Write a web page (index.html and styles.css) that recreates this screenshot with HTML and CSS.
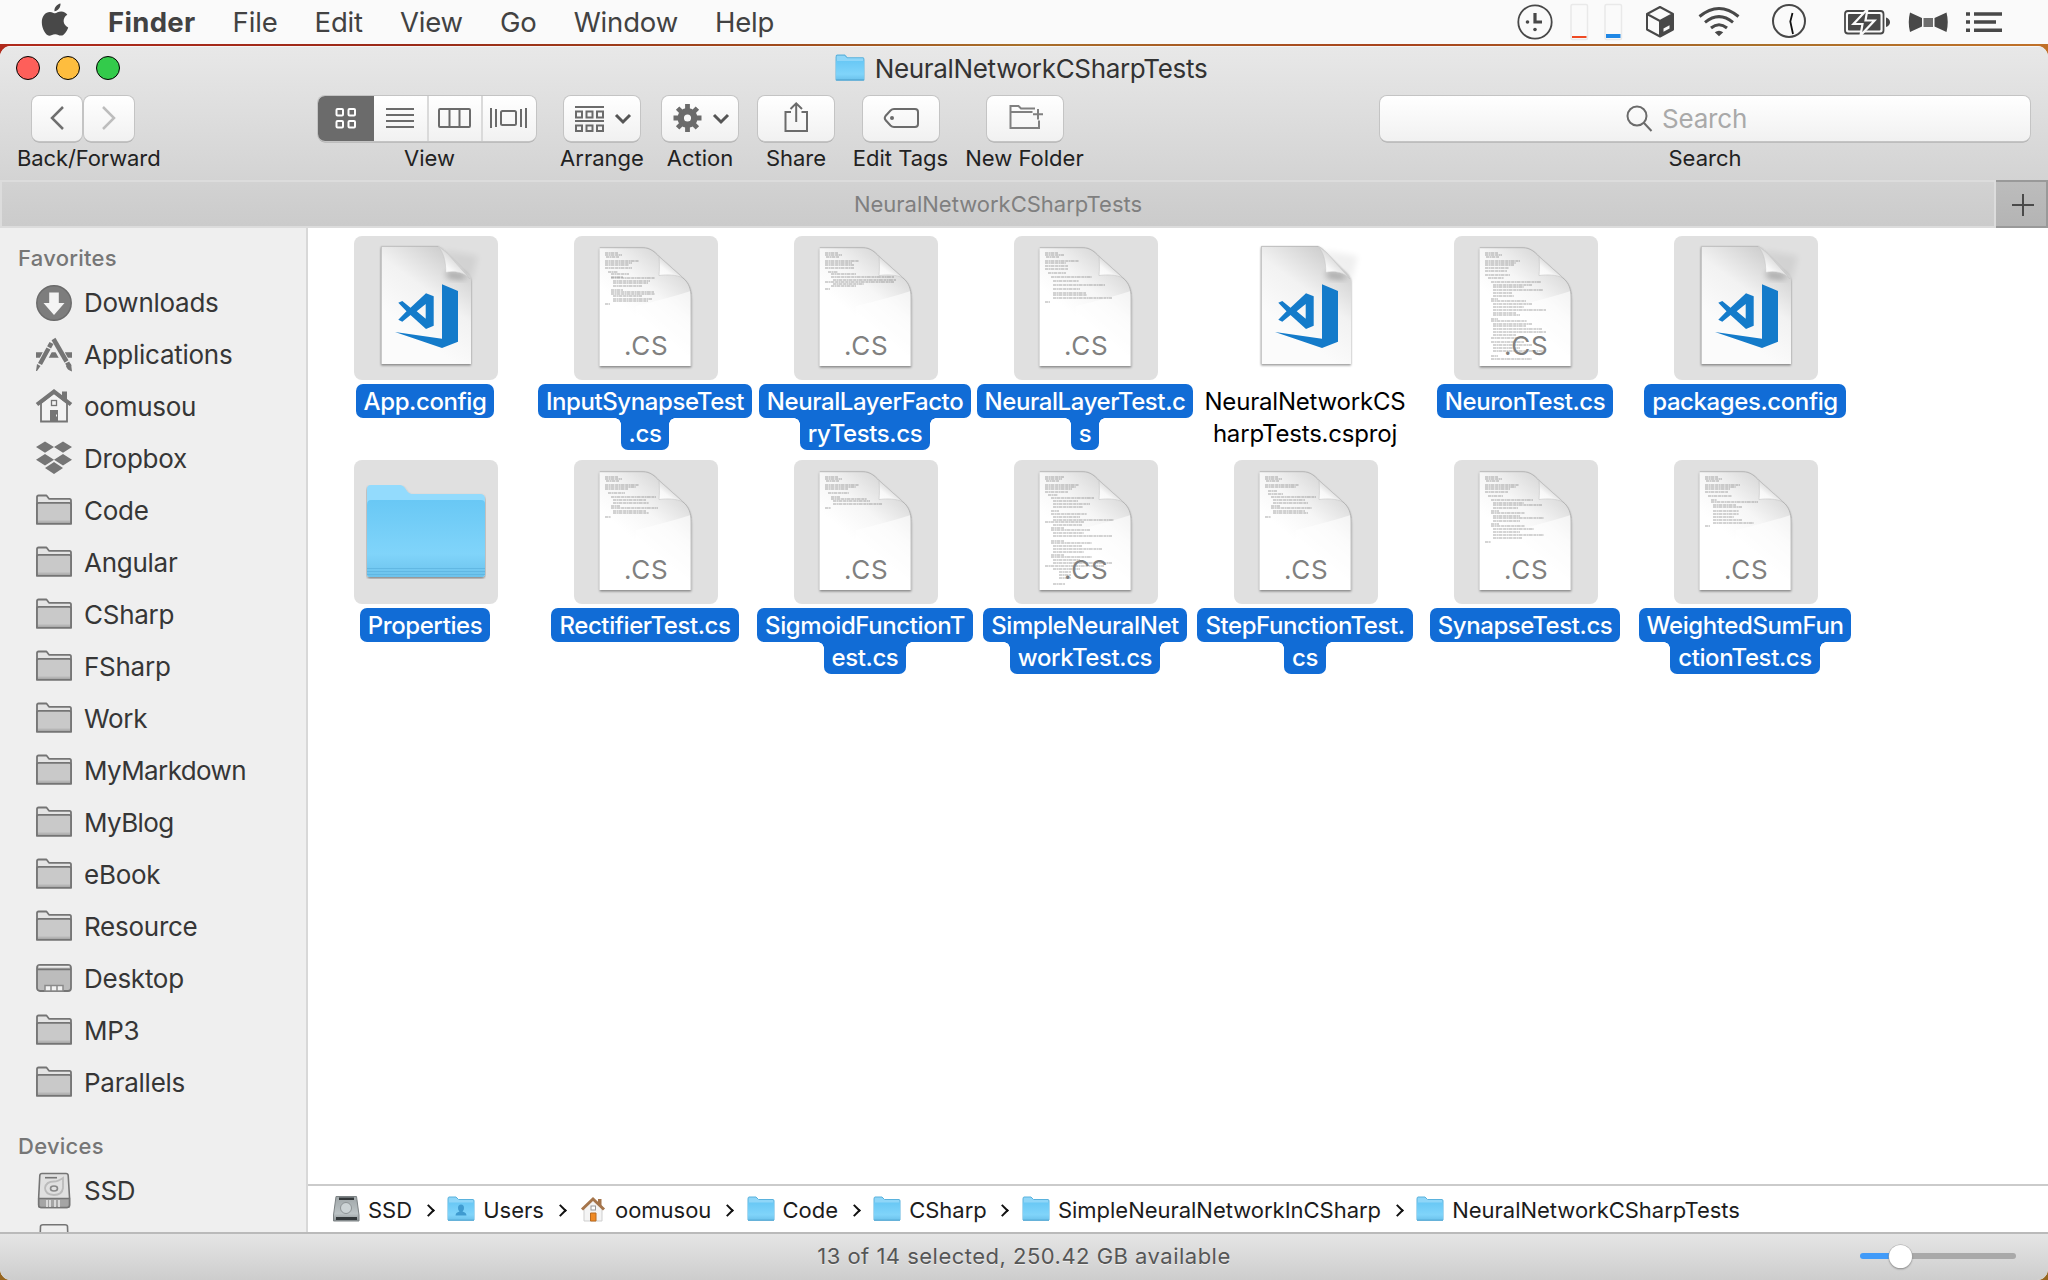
FILE: index.html
```
<!DOCTYPE html>
<html lang="en">
<head>
<meta charset="utf-8">
<title>NeuralNetworkCSharpTests</title>
<link rel="stylesheet" href="styles.css">
</head>
<body>
<svg class="defs" width="0" height="0" aria-hidden="true">
  <defs>
    <linearGradient id="gPage" gradientUnits="userSpaceOnUse" x1="58" y1="78" x2="97" y2="31">
      <stop offset="0" stop-color="#fff"/><stop offset="0.5" stop-color="#f6f6f6"/><stop offset="1" stop-color="#dcdcdc"/>
    </linearGradient>
    <linearGradient id="gFold" x1="0" y1="1" x2="0.6" y2="0.3">
      <stop offset="0" stop-color="#fff"/><stop offset="0.5" stop-color="#f8f8f8"/><stop offset="1" stop-color="#d0d0d0"/>
    </linearGradient>
    <linearGradient id="gVs" gradientUnits="userSpaceOnUse" x1="50" y1="90" x2="100" y2="22">
      <stop offset="0" stop-color="#fbfbfb"/><stop offset="0.5" stop-color="#f2f2f2"/><stop offset="1" stop-color="#cfcfcf"/>
    </linearGradient>
    <linearGradient id="gFolder" x1="0" y1="0" x2="0" y2="1">
      <stop offset="0" stop-color="#69c8f5"/><stop offset="0.7" stop-color="#80d4fa"/><stop offset="1" stop-color="#6cc2ec"/>
    </linearGradient>
    <linearGradient id="gDisk" x1="0" y1="0" x2="0" y2="1">
      <stop offset="0" stop-color="#9fa6a8"/><stop offset="0.7" stop-color="#bcc3c5"/><stop offset="1" stop-color="#8a9092"/>
    </linearGradient>
    <filter id="soft" x="-20%" y="-20%" width="140%" height="140%">
      <feDropShadow dx="0" dy="1.4" stdDeviation="1.3" flood-color="#000" flood-opacity="0.42"/>
    </filter>
    <filter id="haze" x="-50%" y="-50%" width="200%" height="200%"><feGaussianBlur stdDeviation="3"/></filter>

    <symbol id="page" viewBox="0 0 144 144">
      <path filter="url(#soft)" fill="url(#gPage)" d="M25.7 11.5H69C76 11.5 81 16 85 20.5L109 42C115 47 117.3 53 117.3 62V130H25.7Z"/>
      <path fill="#fff" d="M60 129.500L62 70Q95 62 116.800 55V129.500Z" opacity="0.6"/>
      <path fill="none" stroke="#aaa" stroke-width="0.8" d="M25.7 11.7H69C76 11.7 81 16 85 20.5L109 42C115 47 117.1 53 117.1 62V130"/>
      <path fill="url(#gFold)" stroke="#bbb" stroke-width="0.5" d="M85 20.5C85.5 28 85.5 34 85 39.5C93 38.5 102 38.5 109 42Z"/>
    </symbol>
    <symbol id="vs" viewBox="0 0 144 144">
      <path filter="url(#haze)" fill="#000" opacity="0.06" d="M88 14L124 20L117 46Z"/>
      <path filter="url(#soft)" fill="url(#gVs)" d="M27 10H84C88 11 90 14 93 17L114 38C116 40 117 42 117 45V128H27Z"/>
      <path fill="none" stroke="#b5b5b5" stroke-width="0.8" d="M27.4 128V10.4H84"/>
      <path filter="url(#haze)" fill="#000" opacity="0.3" d="M92 36L112 39L110 43L94 42Z"/>
      <path fill="url(#gFold)" stroke="#c4c4c4" stroke-width="0.5" d="M84 10C90 17 92 26 91.7 36.5C100 34.500 110 36 116 43L93 17Z"/>
      <path fill="#147bca" fill-rule="evenodd" d="M88 48.300L104 55V105.700L88 112L41 96L88 102.700ZM72 57.300L79.700 60.300V89.700L72 93L56.500 78.900L48.300 85.700L44.300 83.700L52.500 75.300L44.300 66.700L48.300 65L56.500 71.800ZM71.700 68L62.700 75.300L71.700 82.700Z"/>
    </symbol>
    <symbol id="bluefolder" viewBox="0 0 120 94">
      <path filter="url(#soft)" fill="#93dbfd" d="M1 4Q1 0 5 0H34C40 0 40 9 46 9H114Q119 9 119 14V88Q119 92 116 92H4Q1 92 1 89Z"/>
      <path fill="url(#gFolder)" d="M1 20Q1 15 5 15H115Q119 15 119 19V88Q119 92 116 92H4Q1 92 1 89Z"/>
      <path stroke="#5bb2de" stroke-width="1" opacity="0.7" d="M1 83.500H119M1 86.500H119M1 89.500H119"/>
    </symbol>
    <symbol id="minifolder" viewBox="0 0 28 26">
      <path fill="#8fd6f8" stroke="#5ab2dd" stroke-width="1" d="M1 3Q1 1 2 1H9L11.500 3.500H26Q27 3.500 27 5V24H1Z"/>
      <path fill="url(#gFolder)" d="M1 6.500H27V24H1Z"/>
      <path stroke="#55a9d4" stroke-width="1.200" d="M1 24.200H27"/>
    </symbol>
    <symbol id="sfolder" viewBox="0 0 36 36">
      <path fill="#e4e4e4" stroke="#757575" stroke-width="1.800" stroke-linejoin="round" d="M1 30.500V4Q1 2.500 2.500 2.500H10.500L13 5.800H33.500Q35 5.800 35 7.500V30.500Z"/>
      <path fill="#c9c9c9" stroke="#757575" stroke-width="1.800" d="M1 30.500V11.500Q1 9.800 2.700 9.800H33.300Q35 9.800 35 11.500V30.500Z"/>
      <path stroke="#b5b5b5" stroke-width="2" d="M2 28.600H34"/>
    </symbol>
  </defs>
</svg>

<header class="menubar">
  <svg class="apple" width="28" height="34" viewBox="0 0 28 34"><path fill="#484848" d="M19.500 0.500C19.800 4.500 16.800 8 13.500 8.200C13 4.600 16.200 1 19.500 0.500ZM14 10.300C15.400 10.300 17.300 8.600 20.200 8.600C22.900 8.600 25.100 10 26.300 11.800C21 15 21.600 22 27.200 24.400C25.800 28.400 23 32.500 20.200 32.600C17.800 32.700 17 31.200 14.200 31.200C11.400 31.200 10.500 32.600 8.200 32.700C4.800 32.800 0.800 25.800 0.800 19.300C0.800 12.800 4.700 9 8.700 8.900C11.200 8.800 12.900 10.300 14 10.300Z"/></svg>
  <nav class="menus">
    <span class="menu-app">Finder</span><span>File</span><span>Edit</span><span>View</span><span>Go</span><span>Window</span><span>Help</span>
  </nav>
  <svg class="status-icons" width="500" height="44" viewBox="1510 0 500 44" fill="none" stroke="#484848">
    <circle cx="1535" cy="22" r="16.700" stroke-width="1.800"/>
    <path stroke-width="3.200" d="M1535 13V22H1542"/>
    <g fill="#484848" stroke="none"><circle cx="1527.500" cy="22" r="1.800"/><circle cx="1535" cy="29.500" r="1.800"/></g>
    <rect x="1571" y="4.500" width="16.500" height="35" rx="1.500" stroke="#e9e9e9" stroke-width="1.500"/><rect x="1572" y="36" width="14.500" height="2" fill="#ef4a23" stroke="none"/>
    <rect x="1605" y="4.500" width="16.500" height="35" rx="1.500" stroke="#e9e9e9" stroke-width="1.500"/><rect x="1606" y="34" width="14.500" height="4" fill="#1f87e5" stroke="none"/>
    <path stroke-width="2" stroke-linejoin="round" d="M1660 7L1673 14V29.500L1660 36.500L1647 29.500V14ZM1647 14L1660 21L1673 14M1660 21V36.500"/>
    <path fill="#484848" stroke="none" d="M1660 21L1673 14V29.500L1660 36.500Z"/><path fill="#fafafa" stroke="none" d="M1663.500 28.500L1669.500 25.300V28.500L1663.500 31.700Z"/>
    <g stroke-width="3"><path d="M1699.500 16.500Q1719 0.500 1738.500 16.500"/><path d="M1705 22.300Q1719 11 1733 22.300"/><path d="M1711 28Q1719 21.500 1727 28"/></g>
    <path fill="#484848" stroke="none" d="M1719 36.200L1714.800 32.300Q1719 29 1723.200 32.300Z"/>
    <circle cx="1789" cy="21" r="16" stroke-width="2"/><path stroke="#111" stroke-width="1.800" d="M1792.500 13L1790.300 21.500L1793 34"/>
    <rect x="1845" y="11" width="38.500" height="22.500" rx="3" stroke-width="1.800"/><rect x="1848" y="14" width="32.500" height="16.500" rx="1" fill="#484848" stroke="none"/>
    <path fill="#484848" stroke="none" d="M1886 17.500Q1890 19 1890 22.200Q1890 25.500 1886 27Z"/>
    <path fill="#484848" stroke="#fafafa" stroke-width="2.200" d="M1867.500 9L1853.500 24H1862.500L1860.500 35.500L1874.500 20.500H1865.500Z"/>
    <path fill="#484848" stroke="none" d="M1910 12.500L1922 18V26.500L1910 32Q1907.500 22 1910 12.500ZM1946.500 12.500L1934.500 18V26.500L1946.500 32Q1949 22 1946.500 12.500Z"/><rect x="1923.500" y="18" width="9.500" height="9" fill="#6e6e6e" stroke="none"/>
    <path stroke-width="3.600" d="M1974 14H2002M1974 22H1996M1974 30.200H2002M1966 14H1970M1966 22H1970M1966 30.200H1970"/>
  </svg>
</header>

<main class="window">
  <header class="chrome">
    <div class="titlebar">
      <div class="lights"><i class="close"></i><i class="mini"></i><i class="zoom"></i></div>
      <div class="title"><svg width="30" height="28"><use href="#minifolder"/></svg><span>NeuralNetworkCSharpTests</span></div>
    </div>
    <div class="toolbar">
      <div class="tool tool-nav">
        <div class="pair">
          <span class="btn"><svg width="50" height="46" fill="none" stroke="#6f6f6f" stroke-width="2.500"><path d="M31 12L20 23L31 34"/></svg></span>
          <span class="btn"><svg width="50" height="46" fill="none" stroke="#bdbdbd" stroke-width="2.500"><path d="M19 12L30 23L19 34"/></svg></span>
        </div>
        <span class="label">Back/Forward</span>
      </div>
      <div class="tool tool-view">
        <div class="segments">
          <span class="seg on"><svg width="56" height="46" fill="none" stroke="#fff" stroke-width="2"><rect x="18.500" y="14" width="6.500" height="6.500" rx="1"/><rect x="30.500" y="14" width="6.500" height="6.500" rx="1"/><rect x="18.500" y="26" width="6.500" height="6.500" rx="1"/><rect x="30.500" y="26" width="6.500" height="6.500" rx="1"/></svg></span>
          <span class="seg"><svg width="54" height="46" stroke="#6b6b6b" stroke-width="2"><path d="M12 14H40M12 20H40M12 26H40M12 32H40"/></svg></span>
          <span class="seg"><svg width="54" height="46" fill="none" stroke="#6b6b6b" stroke-width="2"><rect x="10" y="14" width="31" height="18" rx="1"/><path d="M20.500 14V32M30.500 14V32"/></svg></span>
          <span class="seg"><svg width="54" height="46" fill="none" stroke="#6b6b6b" stroke-width="2"><path d="M8 13V33M13 14V32M38 14V32M43 13V33"/><rect x="18" y="16" width="15" height="14" rx="1.500"/></svg></span>
        </div>
        <span class="label">View</span>
      </div>
      <div class="tool">
        <span class="btn wide"><svg width="78" height="46" fill="none" stroke="#6b6b6b" stroke-width="2"><path d="M12 12H41M12 26H41"/><path d="M13 16.500H19V22.500H13ZM23.500 16.500H29.500V22.500H23.500ZM34 16.500H40V22.500H34ZM13 30.500H19V36H13ZM23.500 30.500H29.500V36H23.500ZM34 30.500H40V36H34Z"/><path stroke="#555" stroke-width="3" d="M53 20L60 27L67 20"/></svg></span>
        <span class="label">Arrange</span>
      </div>
      <div class="tool">
        <span class="btn wide"><svg width="78" height="46" fill="none"><circle cx="26.500" cy="23" r="6.800" stroke="#6b6b6b" stroke-width="6.500"/><path stroke="#6b6b6b" stroke-width="4.800" d="M26.500 9V15M26.500 31V37M12.500 23H18.500M34.500 23H40.500M16.600 13.100L21 17.500M32 28.500L36.400 32.900M16.600 32.900L21 28.500M32 17.500L36.400 13.100"/><path stroke="#555" stroke-width="3" d="M53 20L60 27L67 20"/></svg></span>
        <span class="label">Action</span>
      </div>
      <div class="tool tool-share">
        <span class="btn wide"><svg width="78" height="46" fill="none" stroke="#6b6b6b" stroke-width="2"><path d="M34 17H28.500V36H50V17H44.500M39.200 27V8.500M33.500 14L39.200 8.300L45 14"/></svg></span>
        <span class="label">Share</span>
      </div>
      <div class="tool tool-tags">
        <span class="btn wide"><svg width="78" height="46" fill="none" stroke="#6b6b6b" stroke-width="2"><path d="M32 14H53Q56 14 56 17V29Q56 32 53 32H32Q30 32 28.500 30.500L23.500 25Q22 23 23.500 21L28.500 15.500Q30 14 32 14Z"/><circle cx="30" cy="23" r="2" fill="#6b6b6b" stroke="none"/></svg></span>
        <span class="label">Edit Tags</span>
      </div>
      <div class="tool tool-new">
        <span class="btn wide"><svg width="78" height="46" fill="none" stroke="#808080" stroke-width="2"><path d="M49 13.500H35L32.500 11H24.500V33H53V25.500M24.500 17H46.500M47 19.200H57M52 14V24.500"/></svg></span>
        <span class="label">New Folder</span>
      </div>
      <div class="tool tool-search">
        <span class="btn field"><svg width="27" height="28" fill="none" stroke="#6b6b6b" stroke-width="2"><circle cx="11" cy="11" r="9.500"/><path d="M17.800 17.800L25.500 26"/></svg><span>Search</span></span>
        <span class="label">Search</span>
      </div>
    </div>
    <div class="tabbar">
      <span class="tab">NeuralNetworkCSharpTests</span>
      <span class="addtab"><svg width="22" height="22" stroke="#4a4a4a" stroke-width="2"><path d="M0 11H22M11 0V22"/></svg></span>
    </div>
  </header>

  <div class="body">
    <aside class="sidebar">
      <h2>Favorites</h2>
      <ul>
        <li><svg><circle cx="18" cy="18" r="17.200" fill="#7d7d7d" stroke="#6b6b6b" stroke-width="1.500"/><path fill="#f4f4f4" d="M13.200 7.500H22.800V18H28.500L18 30L7.500 18H13.200Z"/></svg><span>Downloads</span></li>
        <li><svg fill="none" stroke="#757575"><path stroke-width="5.500" d="M0 18H7M12 18H24M29 18H36"/><path stroke="#efefef" stroke-width="8" d="M17 4L2 33M18 4L34 33"/><path stroke-width="4.500" d="M17.500 2L30.500 24.500"/><path stroke-width="4.500" stroke-dasharray="5 1.300 30" d="M15.500 6L4 27"/><path stroke-width="4.500" d="M31.200 25.500L33.500 30"/><path fill="#757575" stroke="none" d="M1 27L4.500 29L1 34H0ZM30 29L35 26.500L36 34.500Q31 33 30 29Z"/></svg><span>Applications</span></li>
        <li><svg fill="none" stroke="#757575"><path stroke-width="1.800" fill="#f3f3f3" d="M5 14V32.500H31V14L18 4Z"/><path stroke-width="4" d="M1 15.500L18 2.500L35 15.500"/><path fill="#757575" stroke="none" d="M26 2.500H31V12L26 8ZM14 21H22V33H14Z"/><rect x="15.500" y="11.500" width="5" height="5" stroke-width="1.300"/><path stroke="#efefef" d="M20.500 25.500V27.500"/></svg><span>oomusou</span></li>
        <li><svg fill="#757575"><path d="M9 0.500L18 6L9 11.800L0 6ZM27 0.500L36 6L27 11.800L18 6ZM9 13L18 18.800L9 24.500L0 18.800ZM27 13L36 18.800L27 24.500L18 18.800ZM18 21L27 27L18 33L9 27Z"/></svg><span>Dropbox</span></li>
        <li><svg><use href="#sfolder"/></svg><span>Code</span></li>
        <li><svg><use href="#sfolder"/></svg><span>Angular</span></li>
        <li><svg><use href="#sfolder"/></svg><span>CSharp</span></li>
        <li><svg><use href="#sfolder"/></svg><span>FSharp</span></li>
        <li><svg><use href="#sfolder"/></svg><span>Work</span></li>
        <li><svg><use href="#sfolder"/></svg><span class="snug">MyMarkdown</span></li>
        <li><svg><use href="#sfolder"/></svg><span class="snug">MyBlog</span></li>
        <li><svg><use href="#sfolder"/></svg><span>eBook</span></li>
        <li><svg><use href="#sfolder"/></svg><span>Resource</span></li>
        <li><svg fill="none" stroke="#757575" stroke-width="1.800"><rect x="1" y="4" width="34" height="26" rx="3" fill="#bcbcbc"/><path d="M2.500 5.700H33.500" stroke="#ededed"/><path d="M1 8.300H35"/><path fill="#f2f2f2" stroke="#8a8a8a" stroke-width="1.500" d="M9 24.500H15V30H9ZM15 24.500H21V30H15ZM21 24.500H27V30H21Z"/></svg><span>Desktop</span></li>
        <li><svg><use href="#sfolder"/></svg><span>MP3</span></li>
        <li><svg><use href="#sfolder"/></svg><span>Parallels</span></li>
      </ul>
      <h2 class="devices">Devices</h2>
      <ul>
        <li><svg fill="none" stroke="#757575" stroke-width="1.600"><path fill="#e0e0e0" d="M6 0.500H30Q32 0.500 32.200 2.500L33.500 24V32Q33.500 34.500 31 34.500H5Q2.700 34.500 2.700 32V24L3.800 2.500Q4 0.500 6 0.500Z"/><path fill="#a5a5a5" d="M2.700 25.500H33.500V32Q33.500 34.500 31 34.500H5Q2.700 34.500 2.700 32Z"/><path stroke-width="2" stroke="#d9d9d9" d="M11 27V34M14 27V34M19 27V34M23 27V34"/><path stroke="#bbb" stroke-width="1.800" d="M27 5V15Q26 22 18 22Q9 21.500 9 15Q10 8.500 18 8.500Q22 8.500 27 5Z"/><ellipse cx="18" cy="15.500" rx="3.500" ry="2.500" stroke="#888"/><path d="M9 4.700H21"/></svg><span>SSD</span></li>
        <li><svg fill="none" stroke="#757575" stroke-width="1.600"><path d="M3.500 30L4.500 1.500Q4.500 -0.200 7 -0.200H29Q31.500 -0.200 31.500 1.500L32.500 30Z"/></svg></li>
      </ul>
    </aside>

    <section class="content">
      <div class="grid">
        <figure class="sel"><svg><use href="#vs"/></svg><figcaption><b>App.config</b></figcaption></figure>
        <figure class="sel"><svg><use href="#page"/><path class="code" d="M31 17H44M31 19H48M32 21H45M31 25H65M31 27H58M31 29H55M31 32H58M34 36H44M37 38H55M37 41H49M37 42H81M39 45H76M39 47H74M39 50H68M37 54H49M37 56H80M37 58H81M39 60H68M39 63H78M39 65H74M31 68H36"/><text x="50" y="119">.CS</text></svg><figcaption><b>InputSynapseTest</b><b>.cs</b></figcaption></figure>
        <figure class="sel"><svg><use href="#page"/><path class="code" d="M31 17H44M31 19H48M32 21H45M31 25H65M31 27H58M31 29H60M31 32H60M34 36H44M37 38H62M37 41H100M39 44H102M31 46H100M39 48H70M37 50H62M31 53H36"/><text x="50" y="119">.CS</text></svg><figcaption><b>NeuralLayerFacto</b><b>ryTests.cs</b></figcaption></figure>
        <figure class="sel"><svg><use href="#page"/><path class="code" d="M31 17H44M31 19H50M32 21H45M31 25H65M31 27H52M31 30H54M31 33H54M34 37H52M37 41H78M39 45H65M39 49H91M39 53H66M39 57H72M39 59H73M39 62H98M31 66H36"/><text x="50" y="119">.CS</text></svg><figcaption><b>NeuralLayerTest.c</b><b>s</b></figcaption></figure>
        <figure><svg><use href="#vs"/></svg><figcaption><b>NeuralNetworkCS</b><b>harpTests.csproj</b></figcaption></figure>
        <figure class="sel"><svg><use href="#page"/><path class="code" d="M31 17H44M31 19H48M32 21H45M31 25H66M31 27H62M31 29H60M31 32H55M31 35H53M31 39H56M34 42H50M37 46H87M39 49H78M39 51H70M39 54H89M39 57H58M39 60H60M37 63H44M37 65H72M39 68H78M39 71H70M39 74H92M39 77H62M39 79H66M37 83H44M37 85H73M39 88H78M39 90H72M39 93H88M39 96H92M39 99H62M37 102H72M37 106H70M39 109H78M39 112H66M39 115H90M37 120H44M37 123H78"/><text x="50" y="119">.CS</text></svg><figcaption><b>NeuronTest.cs</b></figcaption></figure>
        <figure class="sel"><svg><use href="#vs"/></svg><figcaption><b>packages.config</b></figcaption></figure>

        <figure class="sel"><svg><use href="#bluefolder" x="12" y="25" width="120" height="94"/></svg><figcaption><b>Properties</b></figcaption></figure>
        <figure class="sel"><svg><use href="#page"/><path class="code" d="M31 17H44M31 19H48M32 21H45M31 25H65M31 27H62M31 29H54M34 33H51M37 37H82M39 40H72M39 43H75M37 46H46M37 48H84M39 51H72M39 53H75M31 57H37"/><text x="50" y="119">.CS</text></svg><figcaption><b>RectifierTest.cs</b></figcaption></figure>
        <figure class="sel"><svg><use href="#page"/><path class="code" d="M31 17H44M31 19H48M32 21H45M31 25H65M31 27H62M31 29H54M34 33H55M37 37H46M37 39H73M39 41H76M39 44H88M31 48H37"/><text x="50" y="119">.CS</text></svg><figcaption><b>SigmoidFunctionT</b><b>est.cs</b></figcaption></figure>
        <figure class="sel"><svg><use href="#page"/><path class="code" d="M31 17H50M31 19H48M32 21H45M31 25H65M31 27H62M31 29H58M31 32H54M34 35H44M37 38H80M39 41H64M39 44H76M39 47H69M37 51H45M37 54H73M39 57H66M39 60H100M31 62H70M39 65H68M37 68H50M37 70H76M39 73H70M39 76H98M37 81H50M37 83H78M39 86H68M39 89H88M39 92H70M37 95H50M37 97H78M39 100H66M39 103H98M31 106H90M39 109H66M45 112H57M45 115H57M45 118H57M39 124H51"/><text x="50" y="119">.CS</text></svg><figcaption><b>SimpleNeuralNet</b><b>workTest.cs</b></figcaption></figure>
        <figure class="sel"><svg><use href="#page"/><path class="code" d="M31 17H44M31 19H48M32 21H45M31 25H65M31 27H62M34 31H43M34 34H49M37 37H82M39 40H71M39 43H74M37 46H46M37 48H78M39 51H71M39 53H74M31 57H37"/><text x="50" y="119">.CS</text></svg><figcaption><b>StepFunctionTest.</b><b>cs</b></figcaption></figure>
        <figure class="sel"><svg><use href="#page"/><path class="code" d="M31 17H44M31 19H48M32 21H45M31 25H65M31 27H62M31 29H56M31 32H54M34 36H49M37 40H79M39 43H70M39 45H88M39 48H64M37 51H45M37 53H71M39 56H66M39 58H90M39 61H66M37 64H45M37 66H71M39 69H80M39 72H66M39 75H90M39 78H68M31 82H37"/><text x="50" y="119">.CS</text></svg><figcaption><b>SynapseTest.cs</b></figcaption></figure>
        <figure class="sel"><svg><use href="#page"/><path class="code" d="M31 17H44M31 19H48M32 21H45M31 25H66M31 27H62M31 29H56M31 32H54M34 36H58M37 40H43M37 42H84M39 45H62M39 47H68M39 51H65M39 54H65M39 57H60M39 60H68M39 63H80M31 66H36"/><text x="50" y="119">.CS</text></svg><figcaption><b>WeightedSumFun</b><b>ctionTest.cs</b></figcaption></figure>
      </div>

      <nav class="pathbar">
        <span class="crumb"><svg><path fill="url(#gDisk)" stroke="#7c8284" d="M4 1.500H24.500L27 20V26H1.500V20Z"/><path fill="#33383a" d="M7 2.500H22V5H7ZM4 22H25V25H4Z"/><circle cx="14" cy="13" r="5.500" fill="#ccd3d5" stroke="#8e9496"/></svg><span>SSD</span></span>
        <span class="crumb"><svg><use href="#minifolder"/><path fill="#3f9bd0" d="M14 9.500Q17 9.500 17 13Q17 15.500 15.500 16.500Q19.500 17.500 19.500 20.500H8.500Q8.500 17.500 12.500 16.500Q11 15.500 11 13Q11 9.500 14 9.500Z"/></svg><span>Users</span></span>
        <span class="crumb"><svg><path fill="#f4f4f4" stroke="#cfcfcf" d="M5 12V26H23V12L14 5Z"/><path fill="none" stroke="#a5754b" stroke-width="3" d="M3 14.500L14 4L25 14.500"/><path fill="#a5754b" d="M19 4H22.500V11L19 8Z"/><path fill="#f08a24" stroke="#b86a20" d="M11.500 18H17V26H11.500Z"/><rect x="12" y="11" width="4.500" height="4" fill="#fff" stroke="#999"/></svg><span>oomusou</span></span>
        <span class="crumb"><svg><use href="#minifolder"/></svg><span>Code</span></span>
        <span class="crumb"><svg><use href="#minifolder"/></svg><span>CSharp</span></span>
        <span class="crumb"><svg><use href="#minifolder"/></svg><span>SimpleNeuralNetworkInCSharp</span></span>
        <span class="crumb"><svg><use href="#minifolder"/></svg><span>NeuralNetworkCSharpTests</span></span>
      </nav>
    </section>
  </div>

  <footer class="statusbar">
    <span>13 of 14 selected, 250.42 GB available</span>
    <div class="slider"><i class="thumb"></i></div>
  </footer>
</main>
</body>
</html>
```
FILE: styles.css
```
* { box-sizing: border-box; }
html, body { height: 100%; }
body {
  margin: 0;
  display: flex;
  flex-direction: column;
  gap: 2px;
  overflow: hidden;
  font-family: Inter, "Liberation Sans", sans-serif;
  background:
    linear-gradient(90deg, #b02a1c 0, #9a2a18 20%, #a04a1c 38%, #a8702a 50%, #a8421c 68%, #a8702a 85%, #c07028 100%) 0 0 / 100% 100px no-repeat,
    #96651f;
}
svg { display: block; flex: none; }
.defs { position: absolute; }

/* Menu bar */
.menubar {
  flex: none;
  height: 44px;
  padding: 0 38px 0 41px;
  display: flex;
  align-items: center;
  background: #fafafa;
  color: #424242;
  font-size: 27.5px;
  letter-spacing: -0.006em;
}
.apple { margin-top: -5px; }
.menus { display: flex; gap: 37px; margin-left: 39px; }
.menu-app { font-weight: 700; letter-spacing: 0.012em; }
.status-icons { margin-left: auto; }

/* Window */
.window {
  flex: 1;
  min-height: 0;
  display: flex;
  flex-direction: column;
  border-radius: 11px;
  overflow: hidden;
  background: #fff;
}
.chrome { flex: none; height: 182px; background: linear-gradient(#e8e8e8, #d3d3d3 134px); border-top: 1px solid #f5f5f5; }
.titlebar { height: 48px; display: grid; grid-template-columns: 1fr auto 1fr; align-items: start; }
.lights { display: flex; gap: 16px; padding: 9px 0 0 16px; }
.lights i { width: 24px; height: 24px; border-radius: 50%; border: 1px solid; }
.close { background: #fe5f5a; border-color: #e0443f; }
.mini { background: #febd3e; border-color: #dfa02f; }
.zoom { background: #33cb4b; border-color: #28ab38; }
.title { display: flex; align-items: center; gap: 10px; height: 42px; padding-right: 6px; font-size: 26px; letter-spacing: -0.013em; color: #333; }

.toolbar { display: flex; height: 85px; padding: 0 17.5px 0 17px; }
.tool { width: 98px; display: flex; flex-direction: column; align-items: center; }
.tool-nav { width: 142px; align-items: flex-start; margin-right: 158px; }
.tool-view { width: 220px; margin-right: 16px; }
.tool-share { width: 94px; }
.tool-tags { width: 115px; }
.tool-new { width: 133px; }
.tool-search { width: 651px; margin-left: auto; }
.label { font-size: 22px; line-height: 26px; margin-top: 3.5px; color: #222; white-space: nowrap; }
.tool-nav .label { letter-spacing: -0.005em; }
.tool-view .label { margin-left: 5px; }
.pair { display: flex; gap: 2px; margin-left: 14.5px; }
.btn, .segments {
  display: flex;
  height: 45px;
  border-radius: 7px;
  background: linear-gradient(#fff, #f1f1f1);
  box-shadow: 0 0 0 1px #c4c4c4, 0 1.5px 0 0 #a2a2a2;
  margin-top: 1px;
}
.pair .btn { margin-top: 1px; }
.btn svg, .segments svg { margin-top: -1px; }
.pair { margin-top: -1px; padding-top: 1px; }
.btn { width: 50px; }
.btn.wide { width: 76px; }
.btn.wide svg { margin-left: -1px; }
.segments { width: 218px; overflow: hidden; }
.seg { flex: none; width: 54px; overflow: hidden; border-left: 2px solid #dadada; }
.seg.on { width: 56px; border-left: 0; background: #6b6b6b; }
.seg.on + .seg { width: 53px; border-left: 0; }
.btn.field { width: 650px; align-items: center; justify-content: center; gap: 9px; padding-right: 37px; font-size: 26px; letter-spacing: -0.007em; color: #a9a9a9; }
.btn.field svg { margin-top: 1px; }

.tabbar { display: flex; height: 48px; }
.tab {
  flex: 1;
  display: flex;
  align-items: center;
  justify-content: center;
  border: 2px solid #dcdcdc;
  background: linear-gradient(#d2d2d2, #cbcbcb);
  font-size: 22px;
  color: #7f7f7f;
}
.addtab { width: 52px; display: flex; align-items: center; justify-content: center; padding: 2px 0 0 4px; background: linear-gradient(#bcbcbc, #b4b4b4); border: 2px solid #999; border-left: 0; }

.body { flex: 1; min-height: 0; display: flex; }

/* Sidebar */
.sidebar { width: 308px; overflow: hidden; background: #efefef; border-right: 2px solid #d8d8d8; }
.sidebar h2 { margin: 0; padding: 15px 0 4px 18px; font-size: 22px; line-height: 30px; font-weight: 500; letter-spacing: 0.012em; color: #767676; }
.sidebar h2.devices { padding-top: 22px; }
.sidebar ul { list-style: none; margin: 0; padding: 0; }
.sidebar li { display: flex; align-items: center; gap: 12px; height: 52px; padding-left: 36px; font-size: 26px; letter-spacing: -0.01em; color: #363636; }
.sidebar li svg { width: 36px; height: 36px; overflow: visible; }
.sidebar li span { padding-bottom: 2px; }
.sidebar li .snug { letter-spacing: -0.023em; }

/* Files */
.content { flex: 1; min-width: 0; display: flex; flex-direction: column; }
.grid { flex: 1; display: grid; grid-template-columns: repeat(7, 220px); grid-auto-rows: 224px; align-content: start; padding: 8px 0 0 8px; }
figure { margin: 0; display: flex; flex-direction: column; align-items: center; gap: 4px; }
figure > svg { width: 144px; height: 144px; border-radius: 8px; }
.sel > svg { background: #e0e0e0; }
figure text { font-size: 26px; letter-spacing: 0.03em; fill: #808080; }
.code { fill: none; stroke: #555; stroke-opacity: 0.5; stroke-width: 1; stroke-dasharray: 3 0.5 1.5 0.4 4 0.7; }
figcaption { display: flex; flex-direction: column; align-items: center; margin-left: -2px; font-size: 24px; letter-spacing: -0.008em; line-height: 34px; color: #000; }
figcaption b { position: relative; font-weight: 400; padding: 1px 7px 0; white-space: nowrap; height: 34px; }
figcaption b + b { margin-top: -2px; }
.sel b { background: #116cd6; color: #fff; font-weight: 500; letter-spacing: -0.017em; border-radius: 7px; padding: 1px 8px 0; }
.sel b + b { border-radius: 0 0 7px 7px; }
/* Concave joints between the two highlighted caption lines */
.sel b + b::before, .sel b + b::after { content: ""; position: absolute; top: 2px; width: 6px; height: 6px; }
.sel b + b::before { left: -6px; background: radial-gradient(circle at 0 100%, transparent 5.500px, #116cd6 6px); }
.sel b + b::after { right: -6px; background: radial-gradient(circle at 100% 100%, transparent 5.500px, #116cd6 6px); }

/* Path bar */
.pathbar { height: 48px; flex: none; display: flex; align-items: center; padding-left: 24px; border-top: 2px solid #cbcbcb; font-size: 22px; letter-spacing: -0.001em; color: #1c1c1c; }
.crumb { display: flex; align-items: center; white-space: nowrap; }
.crumb span { padding-top: 2px; }
.crumb svg { width: 28px; height: 28px; margin-right: 8px; }
.crumb:not(:last-child)::after { content: ""; width: 7px; height: 7px; border: solid #111; border-width: 2.500px 2.500px 0 0; transform: rotate(45deg); margin: 2px 14.500px 0 11.700px; }

/* Status bar */
.statusbar {
  flex: none;
  height: 48px;
  display: grid;
  grid-template-columns: 1fr auto 1fr;
  align-items: center;
  border-top: 2px solid #bababa;
  background: linear-gradient(#e5e5e5, #cdcdcd);
  font-size: 22px;
  letter-spacing: 0.022em;
  color: #565656;
  text-shadow: 0 1px 0 #eee;
}
.statusbar span { grid-column: 2; padding-bottom: 2px; }
.slider { justify-self: end; position: relative; width: 156px; height: 6px; margin: 0 32px 2px 0; border-radius: 3px; background: linear-gradient(90deg, #419bf9 40px, #a9a9a9 40px); }
.thumb { position: absolute; left: 29px; top: -8px; width: 23px; height: 23px; border-radius: 50%; background: #fff; box-shadow: 0 0 0 0.500px #aaa, 0 1px 2px rgba(0, 0, 0, 0.4); }
```
